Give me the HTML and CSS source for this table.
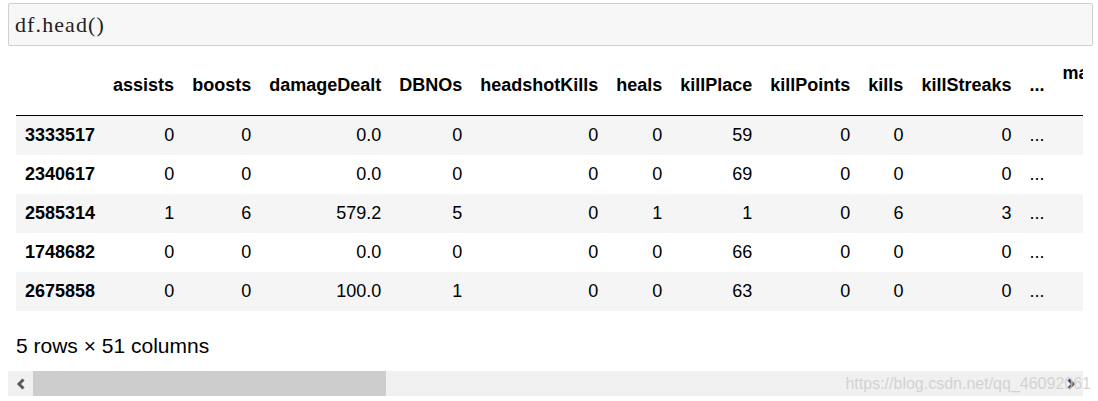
FILE: index.html
```html
<!DOCTYPE html>
<html>
<head>
<meta charset="utf-8">
<link rel="stylesheet" href="styles.css">
</head>
<body>
<div class="page">
  <div class="code-cell">df.head()</div>
  <div class="output">
    <div class="scroll-area">
      <table class="dataframe">
        <thead>
          <tr>
            <th></th>
            <th>assists</th>
            <th>boosts</th>
            <th>damageDealt</th>
            <th>DBNOs</th>
            <th>headshotKills</th>
            <th>heals</th>
            <th>killPlace</th>
            <th>killPoints</th>
            <th>kills</th>
            <th>killStreaks</th>
            <th>...</th>
            <th class="top">maxPlace</th>
          </tr>
        </thead>
        <tbody>
          <tr><th>3333517</th><td>0</td><td>0</td><td>0.0</td><td>0</td><td>0</td><td>0</td><td>59</td><td>0</td><td>0</td><td>0</td><td>...</td><td></td></tr>
          <tr><th>2340617</th><td>0</td><td>0</td><td>0.0</td><td>0</td><td>0</td><td>0</td><td>69</td><td>0</td><td>0</td><td>0</td><td>...</td><td></td></tr>
          <tr><th>2585314</th><td>1</td><td>6</td><td>579.2</td><td>5</td><td>0</td><td>1</td><td>1</td><td>0</td><td>6</td><td>3</td><td>...</td><td></td></tr>
          <tr><th>1748682</th><td>0</td><td>0</td><td>0.0</td><td>0</td><td>0</td><td>0</td><td>66</td><td>0</td><td>0</td><td>0</td><td>...</td><td></td></tr>
          <tr><th>2675858</th><td>0</td><td>0</td><td>100.0</td><td>1</td><td>0</td><td>0</td><td>63</td><td>0</td><td>0</td><td>0</td><td>...</td><td></td></tr>
        </tbody>
      </table>
      <p class="shape">5 rows × 51 columns</p>
    </div>
    <div class="hscroll">
      <div class="sb-btn">
        <svg width="10" height="12" viewBox="0 0 10 12"><path d="M7.5 1.5 L3 6 L7.5 10.5" fill="none" stroke="#5a5a5a" stroke-width="3"/></svg>
      </div>
      <div class="sb-thumb"></div>
      <div class="sb-track"></div>
      <div class="sb-btn">
        <svg width="10" height="12" viewBox="0 0 10 12"><path d="M2.5 1.5 L7 6 L2.5 10.5" fill="none" stroke="#4a4a4a" stroke-width="3"/></svg>
      </div>
    </div>
    <span class="watermark">https://blog.csdn.net/qq_46092061</span>
  </div>
</div>
</body>
</html>
```

FILE: styles.css
```css
html, body {
  margin: 0;
  padding: 0;
  background: #ffffff;
}

.page {
  padding: 3px 5px 0 8px;
}

.code-cell {
  box-sizing: border-box;
  height: 43px;
  border: 1px solid #cfcfcf;
  border-radius: 2px;
  background: #f7f7f7;
  padding: 9px 6px 0 6px;
  font-family: "Liberation Serif", serif;
  font-size: 22px;
  line-height: 24px;
  letter-spacing: 1.1px;
  color: #222222;
}

.output {
  position: relative;
  width: 1075px;
  margin-top: 9px;
}

.scroll-area {
  overflow: hidden;
  padding-left: 8px;
}

.dataframe {
  border-collapse: separate;
  border-spacing: 0;
  font-family: "Liberation Sans", Arial, sans-serif;
  font-size: 18px;
  color: #000000;
  white-space: nowrap;
}

.dataframe th,
.dataframe td {
  padding: 0 9px;
  text-align: right;
  vertical-align: middle;
}

.dataframe thead tr {
  height: 61px;
}

.dataframe thead th {
  font-weight: bold;
  border-bottom: 1px solid #000000;
}

.dataframe thead th.top {
  vertical-align: top;
  padding-top: 8px;
  text-align: left;
}

.dataframe tbody tr {
  height: 39px;
}

.dataframe tbody tr:nth-child(odd) {
  background: #f5f5f5;
}

.dataframe tbody th {
  font-weight: bold;
  text-align: left;
}

.shape {
  margin: 23px 0 13px 0;
  font-family: "Liberation Sans", Arial, sans-serif;
  font-size: 21px;
  color: #000000;
}

.hscroll {
  display: flex;
  height: 25px;
  background: #f0f0f0;
}

.sb-btn {
  width: 25px;
  flex: 0 0 25px;
  display: flex;
  align-items: center;
  justify-content: center;
}

.sb-thumb {
  width: 353px;
  flex: 0 0 353px;
  background: #cdcdcd;
}

.sb-track {
  flex: 1 1 auto;
}

.watermark {
  position: absolute;
  right: -8px;
  bottom: 3px;
  font-family: "Liberation Sans", Arial, sans-serif;
  font-size: 16px;
  color: rgba(205, 205, 205, 0.85);
  pointer-events: none;
}
```
